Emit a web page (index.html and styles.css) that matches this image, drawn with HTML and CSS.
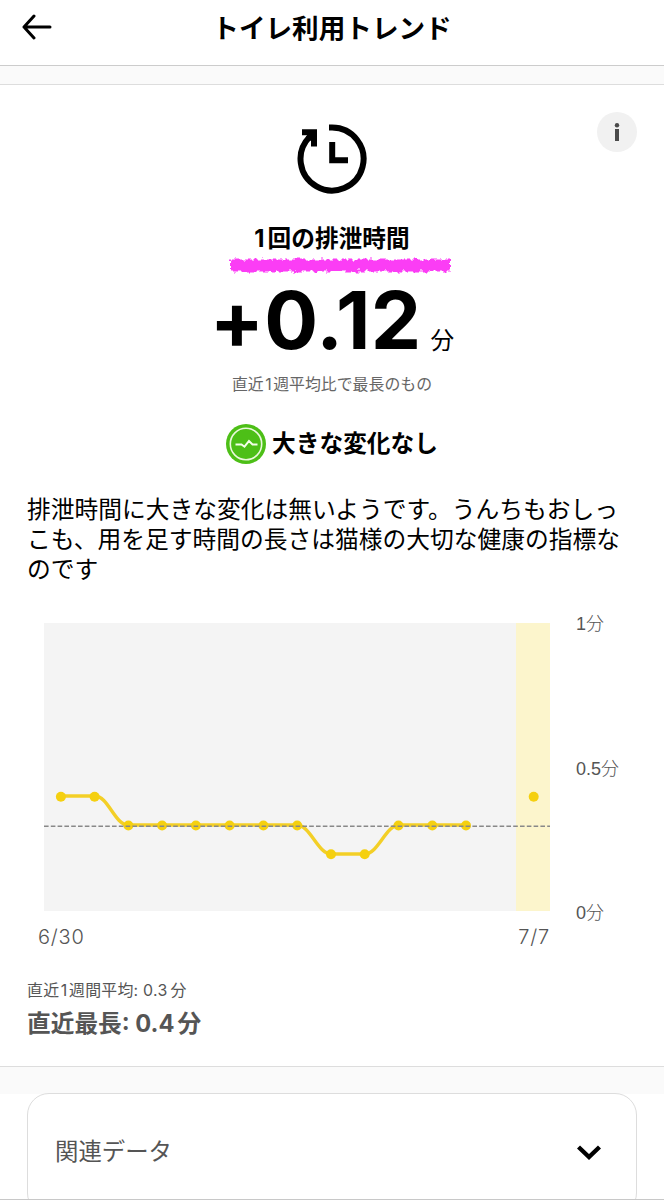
FILE: index.html
```html
<!doctype html>
<html lang="ja">
<head>
  <meta charset="UTF-8">
  <meta name="viewport" content="width=device-width, initial-scale=1.0">
  <title>トイレ利用トレンド</title>
  <link rel="stylesheet" href="styles.css">
</head>
<body>
  <header class="header">
    <svg class="back-icon" viewBox="0 0 30 28" width="30" height="28">
      <path d="M28 14H2M12 3L2 14L12 25"/>
    </svg>
    <h1>トイレ利用トレンド</h1>
  </header>

  <main class="trend">
    <button type="button" class="info-button" aria-label="詳細">
      <svg viewBox="0 0 40 40" width="40" height="40">
        <circle cx="20" cy="13.2" r="2.2"/>
        <rect x="18" y="17" width="4" height="12"/>
      </svg>
    </button>

    <svg class="clock-icon" viewBox="0 0 70 70" width="70" height="70">
      <path d="M32 3.5H35A31.5 31.5 0 1 1 12.5 13"/>
      <path d="M5 8.2H17V22.5M17 8L11 15"/>
      <path d="M35.2 18V36.2H51"/>
    </svg>
    <h2><span class="digit">1</span>回の排泄時間</h2>
    <svg class="marker" viewBox="0 0 222 16" width="222" height="16">
      <filter id="rough" x="-5%" y="-50%" width="110%" height="200%">
        <feTurbulence type="fractalNoise" baseFrequency="0.22" numOctaves="2" seed="4"/>
        <feDisplacementMap in="SourceGraphic" scale="7" xChannelSelector="R" yChannelSelector="G"/>
      </filter>
      <rect x="1" y="2.5" width="220" height="12" filter="url(#rough)"/>
    </svg>

    <p class="value"><span class="number">+0.12</span><span class="unit">分</span></p>
    <p class="caption">直近<span class="digit">1</span>週平均比で最長のもの</p>

    <div class="status">
      <svg viewBox="0 0 40 40" width="40" height="40">
        <circle class="disc" cx="20" cy="20" r="20"/>
        <circle class="ring" cx="20" cy="20" r="15.7"/>
        <path class="pulse" d="M9.5 20.4H15.5L18.5 22.7L23 17L26.5 20.4H31.5"/>
      </svg>
      <span>大きな変化なし</span>
    </div>

    <p class="description">排泄時間に大きな変化は無いようです。うんちもおしっこも、用を足す時間の長さは猫様の大切な健康の指標なのです</p>

    <div class="chart">
      <svg class="plot" viewBox="0 0 506 288" width="506" height="288">
        <rect class="plot-bg" width="506" height="288"/>
        <rect class="today" x="472" width="34" height="288"/>
        <path class="line" d="M17 173H51C64 173 71 202 84 202H253C266 202 274 231 287 231H321C334 231 342 202 355 202H422"/>
        <g class="dots">
          <circle cx="16.9" cy="173.7" r="5"/>
          <circle cx="50.6" cy="173.7" r="5"/>
          <circle cx="84.4" cy="202.5" r="5"/>
          <circle cx="118.1" cy="202.5" r="5"/>
          <circle cx="151.9" cy="202.5" r="5"/>
          <circle cx="185.6" cy="202.5" r="5"/>
          <circle cx="219.4" cy="202.5" r="5"/>
          <circle cx="253.2" cy="202.5" r="5"/>
          <circle cx="287" cy="231.2" r="5"/>
          <circle cx="320.7" cy="231.2" r="5"/>
          <circle cx="354.5" cy="202.5" r="5"/>
          <circle cx="388.3" cy="202.5" r="5"/>
          <circle cx="422" cy="202.5" r="5"/>
          <circle cx="489.7" cy="173.7" r="5"/>
        </g>
        <path class="average" d="M0 203.3H506"/>
      </svg>
      <div class="y-axis">
        <span>1分</span>
        <span>0.5分</span>
        <span>0分</span>
      </div>
      <div class="x-axis">
        <span>6/30</span>
        <span>7/7</span>
      </div>
    </div>

    <p class="week-average">直近<span class="digit">1</span>週間平均: 0.3<span class="minutes">分</span></p>
    <p class="longest">直近最長: 0.4<span class="minutes">分</span></p>
  </main>

  <section class="related">
    <div class="related-card">
      <span>関連データ</span>
      <svg viewBox="0 0 24 16" width="24" height="16">
        <path d="M1.5 2L12 12L22.5 2"/>
      </svg>
    </div>
  </section>
</body>
</html>
```
FILE: styles.css
```css
* {
  box-sizing: border-box;
}
body {
  margin: 0;
  height: 1200px;
  overflow: hidden;
  display: flex;
  flex-direction: column;
  background-color: #fff;
  border-bottom: 1px solid #c8c8c8;
  color: #000;
  font-family: Inter, "Noto Sans CJK JP", sans-serif;
}
h1, h2, p {
  margin: 0;
}
svg {
  display: block;
  flex: none;
}
.header {
  height: 66px;
  flex: none;
  display: grid;
  grid-template-columns: 60px 1fr 60px;
  align-items: start;
  border-bottom: 1px solid #ccc;
}
.back-icon {
  margin: 13px 0 0 22px;
  fill: none;
  stroke: #000;
  stroke-width: 3;
  stroke-linecap: round;
  stroke-linejoin: round;
}
.header h1 {
  padding-top: 8px;
  font-size: 26.6px;
  line-height: 40px;
  font-weight: 700;
  text-align: center;
}
.trend {
  position: relative;
  height: 1001px;
  flex: none;
  padding: 39px 27px 0;
  display: flex;
  flex-direction: column;
  align-items: center;
  border-top: 18px solid #fafafa;
  border-bottom: 1px solid #ddd;
  box-shadow: inset 0 1px #ddd;
}
.info-button {
  position: absolute;
  top: 28px;
  right: 27px;
  width: 40px;
  height: 40px;
  padding: 0;
  border: 0;
  border-radius: 50%;
  background-color: #f1f1f1;
  fill: #4a4a4a;
}
.clock-icon {
  margin-top: 1px;
  fill: none;
  stroke: #000;
  stroke-width: 6;
}
.digit {
  margin: 0 1.5px;
}
.trend h2 {
  margin-top: 28px;
  font-size: 23.7px;
  line-height: 34px;
  font-weight: 700;
}
.trend h2 .digit {
  margin: 0 3px 0 0;
}
.marker {
  margin: 1px 0 0 16px;
  overflow: visible;
  fill: #fb3ef5;
}
.value {
  margin-top: 2px;
  height: 90px;
  display: flex;
  align-items: baseline;
  gap: 9px;
  line-height: 90px;
}
.number {
  font-size: 80px;
  font-weight: 700;
  letter-spacing: 0.3px;
}
.unit {
  font-size: 23.7px;
}
.caption {
  margin-top: 8px;
  font-size: 15.9px;
  line-height: 24px;
  color: #666;
}
.status {
  margin-top: 27px;
  display: flex;
  align-items: center;
  gap: 6px;
  font-size: 23.7px;
  line-height: 40px;
  font-weight: 700;
}
.disc {
  fill: #4dbf17;
}
.ring {
  fill: none;
  stroke: #eaf8dc;
  stroke-width: 1.6;
}
.pulse {
  fill: none;
  stroke: #f4ffe9;
  stroke-width: 2;
}
.description {
  width: 100%;
  margin-top: 31px;
  font-size: 23.75px;
  line-height: 30.2px;
  word-break: break-all;
}
.description,
.week-average,
.longest {
  align-self: flex-start;
}
.chart {
  align-self: stretch;
  margin: 37.4px 0 0 17px;
  display: grid;
  grid-template-columns: 506px 1fr;
  column-gap: 26px;
  font-weight: 300;
  color: #555;
}
.plot-bg {
  fill: #f4f4f4;
}
.today {
  fill: #fcf5cc;
}
.line {
  fill: none;
  stroke: #f3cf27;
  stroke-width: 3.4;
}
.dots {
  fill: #f5d010;
}
.average {
  stroke: #888;
  stroke-width: 1.4;
  stroke-dasharray: 4.6 2.2;
}
.y-axis {
  margin: -13px 0 -16px;
  display: flex;
  flex-direction: column;
  justify-content: space-between;
  font-family: "Liberation Sans", "Noto Sans CJK JP", sans-serif;
  font-size: 18px;
  line-height: 28px;
}
.x-axis {
  margin: 11px 0 0 -6px;
  display: flex;
  justify-content: space-between;
  font-size: 20px;
  line-height: 30px;
  letter-spacing: 0.8px;
}
.week-average {
  margin-top: 27px;
  font-size: 15.9px;
  line-height: 24px;
  letter-spacing: 0.25px;
  color: #555;
}
.longest {
  margin-top: 3px;
  font-size: 23.7px;
  line-height: 36px;
  font-weight: 700;
  color: #555;
}
.minutes {
  margin-left: 3px;
}
.related {
  flex: none;
  padding: 0 27px;
  background: linear-gradient(#fafafa 27px, #fff 27px);
}
.related-card {
  height: 122px;
  margin-top: 26px;
  padding: 0 35px 4px 27px;
  display: flex;
  align-items: center;
  justify-content: space-between;
  border: 1px solid #ddd;
  border-radius: 22px;
  background-color: #fff;
  font-size: 23.4px;
  color: #555;
}
.related-card span {
  margin-top: -4px;
}
.related-card svg {
  margin-top: 2px;
}
.related-card path {
  fill: none;
  stroke: #000;
  stroke-width: 4.4;
}
```
